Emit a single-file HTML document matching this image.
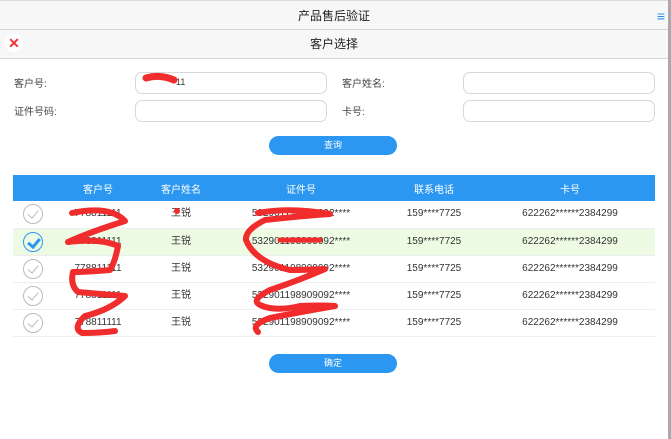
<!DOCTYPE html>
<html><head><meta charset="utf-8"><style>
*{margin:0;padding:0;box-sizing:border-box}
body{width:671px;height:439px;overflow:hidden;background:#fff;font-family:"Liberation Sans","Noto Sans CJK SC",sans-serif;position:relative;color:#333}
.bar{position:absolute;left:0;width:668px;background:#f7f7f7;border-bottom:1px solid #d4d4d4;text-align:center;font-size:12px;color:#222}
.lbl{position:absolute;font-size:10px;color:#444;line-height:12px}
.inp{position:absolute;height:22px;border:1px solid #d8d8d8;border-radius:7px;background:#fff}
.btn{position:absolute;left:269px;width:128px;height:19px;border-radius:10px;background:#2b97f0;color:#fff;font-size:9px;text-align:center;line-height:19px}
table{position:absolute;left:13px;top:175px;width:642px;border-collapse:collapse;font-size:10px;table-layout:fixed}
th{background:#2b97f0;color:#fff;font-weight:normal;height:26px}
td{height:27px;text-align:center;border-bottom:1px solid #eee;color:#333;line-height:12px;padding:0}
tr.sel td{background:#eefbe4}
.ck{display:inline-block;width:20px;height:20px;border-radius:50%;border:1.5px solid #bbb;vertical-align:middle;position:relative}
.ck:after{content:"";position:absolute;left:6px;top:3px;width:5px;height:9px;border:solid #bbb;border-width:0 1.5px 1.5px 0;transform:rotate(40deg)}
.ck.on{border-color:#2b97f0}.ck.on:after{border-color:#2b97f0;border-width:0 3px 3px 0}
</style></head><body>
<div class="bar" style="top:0;height:30px;line-height:30px;border-top:1px solid #ddd">产品售后验证<span style="position:absolute;right:3px;top:0;color:#2b8ff0;font-size:14px;font-weight:bold">≡</span></div>
<div class="bar" style="top:30px;height:29px;line-height:28px">客户选择<span style="position:absolute;left:5px;top:4px;width:18px;height:18px;border-radius:50%;background:#fff;color:#e33;font-size:14px;font-weight:bold;line-height:18px">✕</span></div>
<div style="position:absolute;right:0;top:0;width:3px;height:439px;background:#a9a9ad"></div>
<div class="lbl" style="left:14px;top:79px">客户号:</div>
<div class="lbl" style="left:14px;top:107px">证件号码:</div>
<div class="lbl" style="left:342px;top:79px">客户姓名:</div>
<div class="lbl" style="left:342px;top:107px">卡号:</div>
<div class="inp" style="left:135px;top:72px;width:192px"><span style="position:absolute;left:40px;top:4px;font-size:9px">11</span></div>
<div class="inp" style="left:135px;top:100px;width:192px"></div>
<div class="inp" style="left:463px;top:72px;width:192px"></div>
<div class="inp" style="left:463px;top:100px;width:192px"></div>
<div class="btn" style="top:136px">查询</div>
<table>
<colgroup><col style="width:40px"><col style="width:90px"><col style="width:76px"><col style="width:164px"><col style="width:102px"><col></colgroup>
<tr><th></th><th>客户号</th><th>客户姓名</th><th>证件号</th><th>联系电话</th><th>卡号</th></tr>
<tr><td><span class="ck"></span></td><td>778811111</td><td>王锐</td><td>532901198909092****</td><td>159****7725</td><td>622262******2384299</td></tr>
<tr class="sel"><td><span class="ck on"></span></td><td>778811111</td><td>王锐</td><td>532901198909092****</td><td>159****7725</td><td>622262******2384299</td></tr>
<tr><td><span class="ck"></span></td><td>778811111</td><td>王锐</td><td>532901198909092****</td><td>159****7725</td><td>622262******2384299</td></tr>
<tr><td><span class="ck"></span></td><td>778811111</td><td>王锐</td><td>532901198909092****</td><td>159****7725</td><td>622262******2384299</td></tr>
<tr><td><span class="ck"></span></td><td>778811111</td><td>王锐</td><td>532901198909092****</td><td>159****7725</td><td>622262******2384299</td></tr>
</table>
<div class="btn" style="top:354px">确定</div>
<svg style="position:absolute;left:0;top:0" width="671" height="439" fill="none" stroke="#f02c2c" stroke-linecap="round" stroke-linejoin="round">
<path d="M146 78 Q160 74 174 80" stroke-width="7"/>
<circle cx="177" cy="211" r="3" fill="#f02c2c" stroke="none"/>
<path d="M72 213 Q110 205 125 221 Q90 232 68 242 Q100 238 118 246 Q115 262 110 270 Q85 272 73 272 Q70 285 78 292 Q100 294 125 296 Q110 310 85 316 Q72 328 82 333 Q100 333 115 331" stroke-width="6"/>
<path d="M258 213 Q290 207 330 214 Q300 216 265 220 Q245 230 246 240 Q255 262 290 270 Q305 270 325 269 Q300 280 270 290 Q250 300 260 305 Q275 312 300 306 Q320 305 335 306 Q300 312 270 318 Q250 325 258 332" stroke-width="6"/>
<path d="M280 240 L320 240" stroke-width="5"/>
</svg>
</body></html>
